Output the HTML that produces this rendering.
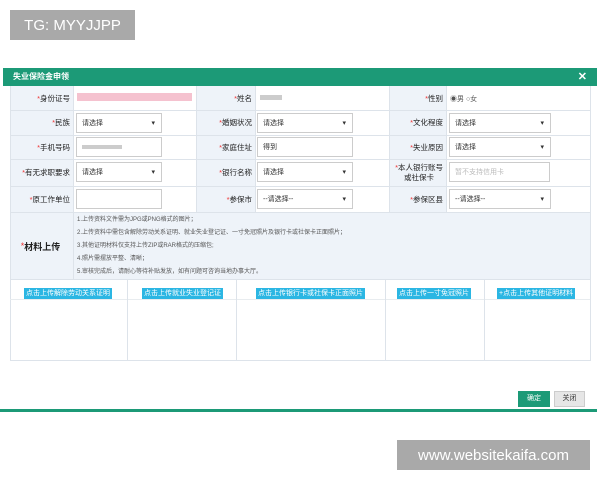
<!DOCTYPE html>
<html><head><meta charset="utf-8"><style>
*{margin:0;padding:0;box-sizing:border-box}
body{width:600px;height:480px;background:#fff;position:relative;overflow:hidden;font-family:"Liberation Sans","Noto Sans CJK SC",sans-serif;font-size:7px;color:#333}
.a{position:absolute}
.wm{background:#a9a9a9;color:#fff;font-size:15px;display:flex;align-items:center;justify-content:center}
.lab{background:#eef3f9;text-align:right;padding-right:3px;display:flex;align-items:center;justify-content:flex-end;font-size:7.5px;color:#222}
.lab b{color:#e33;font-weight:normal}
.box{border:1px solid #ccc;background:#fff;height:20px;font-size:7px;display:flex;align-items:center;padding-left:5px}
.sel::after{content:"▾";position:absolute;right:6px;font-size:7px}
.line{background:#dde3ea}
.up{background:#2bb6e3;color:#fff;font-size:7px;height:11px;line-height:11px;padding:0 2px;white-space:nowrap}
</style></head><body>
<div class="a wm" style="left:10px;top:10px;width:125px;height:30px">TG: MYYJJPP</div>
<div class="a wm" style="left:397px;top:440px;width:193px;height:30px">www.websitekaifa.com</div>

<div class="a" style="left:3px;top:68px;width:594px;height:18px;background:#1c9a77;color:#fff;font-weight:bold;font-size:8px;line-height:18px;padding-left:10px">失业保险金申领<span style="position:absolute;right:10px;font-size:11px">✕</span></div>

<div class="a lab" style="left:10px;top:86px;width:63px;height:24px"><b>*</b>身份证号</div>
<div class="a lab" style="left:10px;top:110px;width:63px;height:25px"><b>*</b>民族</div>
<div class="a lab" style="left:10px;top:135px;width:63px;height:24px"><b>*</b>手机号码</div>
<div class="a lab" style="left:10px;top:159px;width:63px;height:27px"><b>*</b>有无求职要求</div>
<div class="a lab" style="left:10px;top:186px;width:63px;height:26px"><b>*</b>原工作单位</div>
<div class="a lab" style="left:196px;top:86px;width:59px;height:24px"><b>*</b>姓名</div>
<div class="a lab" style="left:196px;top:110px;width:59px;height:25px"><b>*</b>婚姻状况</div>
<div class="a lab" style="left:196px;top:135px;width:59px;height:24px"><b>*</b>家庭住址</div>
<div class="a lab" style="left:196px;top:159px;width:59px;height:27px"><b>*</b>银行名称</div>
<div class="a lab" style="left:196px;top:186px;width:59px;height:26px"><b>*</b>参保市</div>
<div class="a lab" style="left:389px;top:86px;width:57px;height:24px"><b>*</b>性别</div>
<div class="a lab" style="left:389px;top:110px;width:57px;height:25px"><b>*</b>文化程度</div>
<div class="a lab" style="left:389px;top:135px;width:57px;height:24px"><b>*</b>失业原因</div>
<div class="a lab" style="left:389px;top:159px;width:57px;height:27px;text-align:center;line-height:10px"><span><b>*</b>本人银行账号<br>或社保卡</span></div>
<div class="a lab" style="left:389px;top:186px;width:57px;height:26px"><b>*</b>参保区县</div>

<div class="a line" style="left:10px;top:110px;width:580px;height:1px"></div>
<div class="a line" style="left:10px;top:135px;width:580px;height:1px"></div>
<div class="a line" style="left:10px;top:159px;width:580px;height:1px"></div>
<div class="a line" style="left:10px;top:186px;width:580px;height:1px"></div>
<div class="a line" style="left:10px;top:212px;width:580px;height:1px"></div>
<div class="a line" style="left:10px;top:86px;width:1px;height:274px"></div>
<div class="a line" style="left:590px;top:86px;width:1px;height:274px"></div>
<div class="a line" style="left:73px;top:86px;width:1px;height:193px"></div>
<div class="a line" style="left:196px;top:86px;width:1px;height:126px"></div>
<div class="a line" style="left:255px;top:86px;width:1px;height:126px"></div>
<div class="a line" style="left:389px;top:86px;width:1px;height:126px"></div>
<div class="a line" style="left:446px;top:86px;width:1px;height:126px"></div>

<div class="a" style="left:77px;top:93px;width:115px;height:8px;background:#f3b3c3;opacity:.8"></div>
<div class="a" style="left:260px;top:95px;width:22px;height:5px;background:#ccc"></div>
<div class="a" style="left:450px;top:94px;color:#555">◉男 ○女</div>
<div class="a box sel" style="left:76px;top:113px;width:86px">请选择</div>
<div class="a box sel" style="left:257px;top:113px;width:96px">请选择</div>
<div class="a box sel" style="left:449px;top:113px;width:102px">请选择</div>
<div class="a box" style="left:76px;top:137px;width:86px"><span style="width:40px;height:4px;background:#ccc;display:block"></span></div>
<div class="a box" style="left:257px;top:137px;width:96px">得到</div>
<div class="a box sel" style="left:449px;top:137px;width:102px">请选择</div>
<div class="a box sel" style="left:76px;top:162px;width:86px">请选择</div>
<div class="a box sel" style="left:257px;top:162px;width:96px">请选择</div>
<div class="a box" style="left:449px;top:162px;width:101px;color:#bbb">暂不支持信用卡</div>
<div class="a box" style="left:76px;top:189px;width:86px"></div>
<div class="a box sel" style="left:257px;top:189px;width:96px">--请选择--</div>
<div class="a box sel" style="left:449px;top:189px;width:102px">--请选择--</div>

<div class="a lab" style="left:11px;top:213px;width:62px;height:66px;justify-content:center;font-size:9px;font-weight:bold"><b>*</b>材料上传</div>
<div class="a" style="left:74px;top:213px;width:516px;height:66px;background:#eef3f9;font-size:6px;line-height:13px;padding:1px 0 0 3px;color:#555">
1.上传资料文件需为JPG或PNG格式的图片；<br>2.上传资料中需包含解除劳动关系证明、就业失业登记证、一寸免冠照片及银行卡或社保卡正面照片；<br>3.其他证明材料仅支持上传ZIP或RAR格式的压缩包;<br>4.照片需摆放平整、清晰；<br>5.审核完成后，请耐心等待补贴发放，如有问题可咨询当地办事大厅。</div>
<div class="a line" style="left:10px;top:279px;width:580px;height:1px"></div>
<div class="a line" style="left:10px;top:299px;width:580px;height:1px;background:#e8ecef"></div>
<div class="a line" style="left:10px;top:360px;width:581px;height:1px"></div>
<div class="a line" style="left:127px;top:280px;width:1px;height:80px"></div>
<div class="a line" style="left:236px;top:280px;width:1px;height:80px"></div>
<div class="a line" style="left:385px;top:280px;width:1px;height:80px"></div>
<div class="a line" style="left:484px;top:280px;width:1px;height:80px"></div>
<div class="a up" style="left:24px;top:288px">点击上传解除劳动关系证明</div>
<div class="a up" style="left:142px;top:288px">点击上传就业失业登记证</div>
<div class="a up" style="left:256px;top:288px">点击上传银行卡或社保卡正面照片</div>
<div class="a up" style="left:397px;top:288px">点击上传一寸免冠照片</div>
<div class="a up" style="left:497px;top:288px">+点击上传其他证明材料</div>

<div class="a" style="left:518px;top:391px;width:32px;height:16px;background:#1c9a77;color:#fff;text-align:center;line-height:16px">确定</div>
<div class="a" style="left:554px;top:391px;width:31px;height:16px;background:#e6e6e6;border:1px solid #ccc;text-align:center;line-height:14px">关闭</div>
<div class="a" style="left:0;top:409px;width:597px;height:3px;background:#1c9a77"></div>
</body></html>
